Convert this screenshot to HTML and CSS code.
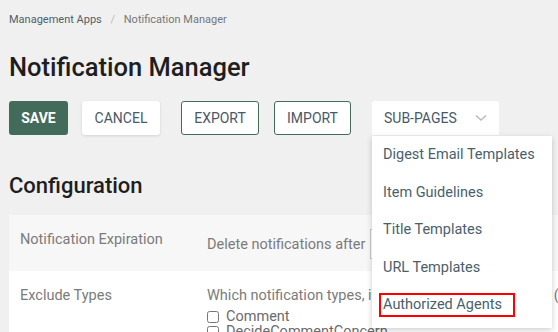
FILE: index.html
```html
<!DOCTYPE html>
<html lang="en">
<head>
    <meta charset="UTF-8">
    <meta name="viewport" content="width=device-width, initial-scale=1.0">
    <title>Notification Manager</title>
    <link rel="stylesheet" href="styles.css">
</head>
<body>
    <div class="breadcrumb">
        <a href="#">Management Apps</a>
        <span class="sep">/</span>
        <span class="current">Notification Manager</span>
    </div>

    <h1>Notification Manager</h1>

    <div class="toolbar">
        <button class="btn btn-save">SAVE</button>
        <button class="btn btn-cancel">CANCEL</button>
        <button class="btn btn-outline btn-export">EXPORT</button>
        <button class="btn btn-outline btn-import">IMPORT</button>
        <div class="subpages">
            <button class="btn btn-sub">SUB-PAGES
                <svg class="chevron" width="12" height="8" viewBox="0 0 12 8"><path d="M1 1.5 L6 6 L11 1.5" fill="none" stroke="#bbb" stroke-width="1.6"/></svg>
            </button>
            <div class="menu">
                <a href="#">Digest Email Templates</a>
                <a href="#">Item Guidelines</a>
                <a href="#">Title Templates</a>
                <a href="#">URL Templates</a>
                <a href="#" class="highlight">Authorized Agents</a>
            </div>
        </div>
    </div>

    <h2>Configuration</h2>

    <div class="config">
        <div class="row row-grey">
            <div class="label">Notification Expiration</div>
            <div class="value value-inline">
                <span>Delete notifications after</span>
                <select class="days"><option>30 days</option></select>
            </div>
        </div>
        <div class="row">
            <div class="label">Exclude Types</div>
            <div class="value">
                <div class="hint">Which notification types, if any, should be suppressed (for all users)?</div>
                <label class="check"><input type="checkbox"> Comment</label>
                <label class="check"><input type="checkbox"> DecideCommentConcern</label>
            </div>
        </div>
    </div>
</body>
</html>
```

FILE: styles.css
```css
body {
    font-family: Roboto, "Liberation Sans", sans-serif;
    background: #f0f0f0;
    margin: 0;
    padding: 13px 0 0 9px;
    overflow: hidden;
}

.breadcrumb {
    font-size: 11px;
    color: #777;
    height: 14px;
}

.breadcrumb a {
    color: #4f5f6b;
    text-decoration: none;
}

.breadcrumb .sep {
    color: #bbb;
    margin: 0 6px;
}

h1 {
    font-size: 25.5px;
    font-weight: 500;
    color: #1e1e1e;
    margin: 0;
    padding-top: 25px;
    line-height: 30px;
}

.toolbar {
    display: flex;
    align-items: flex-start;
    margin-top: 19px;
}

.btn {
    font-family: Roboto, "Liberation Sans", sans-serif;
    font-size: 14px;
    height: 34px;
    border-radius: 3px;
    padding: 0 11px;
    cursor: pointer;
    color: #4a5966;
    background: #fff;
    border: 1px solid transparent;
}

.btn-save {
    background: #436b5b;
    color: #fff;
    font-weight: 700;
    width: 59px;
    margin-right: 14px;
}

.btn-cancel {
    width: 78px;
    box-shadow: 0 1px 3px rgba(0, 0, 0, 0.12);
    margin-right: 21px;
}

.btn-outline {
    border-color: #436b5b;
    background: #fff;
    width: 78px;
}

.btn-export {
    margin-right: 15px;
}

.btn-import {
    width: 77px;
    margin-right: 21px;
}

.subpages {
    position: relative;
}

.btn-sub {
    width: 127px;
    text-align: left;
    display: flex;
    align-items: center;
    border-radius: 3px 3px 0 0;
}

.chevron {
    margin-left: 18px;
}

.menu {
    position: absolute;
    top: 35px;
    left: 0;
    width: 180px;
    background: #fff;
    box-shadow: 0 2px 6px rgba(0, 0, 0, 0.2);
    display: flex;
    flex-direction: column;
    padding: 0 0 4px;
    z-index: 2;
}

.menu a {
    color: #4a5f6c;
    text-decoration: none;
    font-size: 14.5px;
    line-height: 20px;
    margin: 7px 0 6.5px 7px;
    padding: 0 2px;
    align-self: flex-start;
    border: 2px solid transparent;
}

.menu a.highlight {
    border-color: #f00;
    width: 128px;
}

h2 {
    font-size: 22px;
    font-weight: 500;
    color: #1e1e1e;
    margin: 0;
    padding-top: 38px;
    line-height: 26px;
}

.config {
    margin-top: 16px;
    width: 600px;
}

.row {
    display: flex;
    background: #fff;
}

.row-grey {
    background: #f7f7f7;
    height: 56px;
}

.label {
    flex: 0 0 187px;
    padding: 16px 0 0 11px;
    font-size: 14.5px;
    color: #7b7b7b;
}

.value {
    font-size: 14.5px;
    color: #7b7b7b;
    padding-top: 16px;
}

.value-inline {
    display: flex;
    align-items: center;
    padding-top: 2px;
    gap: 5px;
}

.days {
    height: 30px;
    border: 1px solid #ccc;
    background: #fff;
    width: 120px;
    font-size: 14px;
}

.hint {
    margin-bottom: 5px;
    white-space: nowrap;
}

.check {
    display: flex;
    align-items: center;
    line-height: 15px;
    color: #6b6b6b;
}

.check input {
    margin: 0 7px 0 0;
    width: 12px;
    height: 12px;
}
```
